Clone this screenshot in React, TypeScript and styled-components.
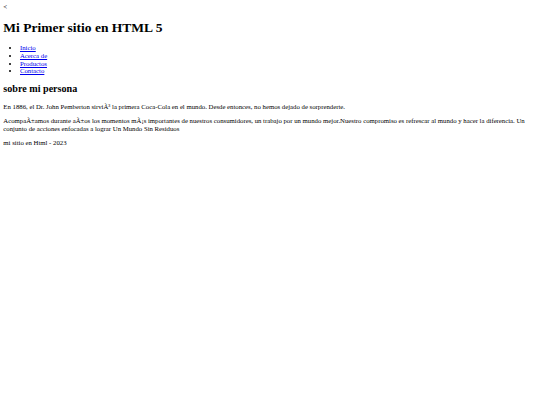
import React from "react";
import styled, { createGlobalStyle } from "styled-components";

const F = 540 / 1280; // font scale (text widths)
const V = 5 / 12; // vertical metrics scale

const Global = createGlobalStyle`
  html, body { background: #ffffff; }
  body {
    margin: ${8 * V}px;
    font-family: "Liberation Serif", "Times New Roman", serif;
    font-size: ${16 * F}px;
    line-height: ${18.4 * V}px;
    color: #000000;
  }
`;

const Stray = styled.div`
  font-size: ${16 * F}px;
`;

const Title = styled.h1`
  font-size: ${32 * F}px;
  line-height: ${36.8 * V}px;
  font-weight: bold;
  margin: ${21.44 * V}px 0;
`;

const NavList = styled.ul`
  list-style: disc;
  margin: ${16 * V}px 0;
  padding-left: ${40 * V}px;
`;

const NavItem = styled.li``;

const NavLink = styled.a`
  color: #0000ee;
  text-decoration: underline;
`;

const SectionTitle = styled.h2`
  font-size: ${24 * F}px;
  line-height: ${27.6 * V}px;
  font-weight: bold;
  margin: ${19.92 * V}px 0;
`;

const Paragraph = styled.p`
  margin: ${16 * V}px 0;
`;

const Footer = styled.footer``;

const links = ["Inicio", "Acerca de", "Productos", "Contacto"];

export default function App() {
  return (
    <>
      <Global />
      <Stray>&lt;</Stray>
      <header>
        <Title>Mi Primer sitio en HTML 5</Title>
        <nav>
          <NavList>
            {links.map((l) => (
              <NavItem key={l}>
                <NavLink href="#">{l}</NavLink>
              </NavItem>
            ))}
          </NavList>
        </nav>
      </header>
      <main>
        <section>
          <SectionTitle>sobre mi persona</SectionTitle>
          <Paragraph>
            En 1886, el Dr. John Pemberton sirviÃ³ la primera Coca-Cola en el mundo. Desde entonces, no hemos dejado de sorprenderte.
          </Paragraph>
          <Paragraph>
            AcompaÃ±amos durante aÃ±os los momentos mÃ¡s importantes de nuestros consumidores, un trabajo por un mundo mejor.Nuestro compromiso es refrescar al mundo y hacer la diferencia. Un conjunto de acciones enfocadas a lograr Un Mundo Sin Residuos
          </Paragraph>
        </section>
      </main>
      <Footer>
        <Paragraph>mi sitio en Html - 2023</Paragraph>
      </Footer>
    </>
  );
}
